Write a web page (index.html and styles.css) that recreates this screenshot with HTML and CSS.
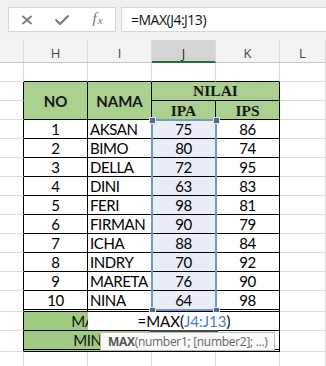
FILE: index.html
```html
<!DOCTYPE html>
<html>
<head>
<meta charset="utf-8">
<link rel="stylesheet" href="styles.css">
</head>
<body>
<div class="toolbar">
  <div class="cmdbox">
    <span class="cmd c1"><svg width="12" height="10" viewBox="0 0 12 10"><path d="M1.5 1 L10.5 9 M10.5 1 L1.5 9" stroke="#7a7a7a" stroke-width="1.7" fill="none"/></svg></span>
    <span class="cmd c2"><svg width="16" height="12" viewBox="0 0 16 12"><path d="M1.5 5.5 L6 10 L14.5 1.5" stroke="#7a7a7a" stroke-width="2.2" fill="none"/></svg></span>
    <span class="cmd c3 fx"><i>f</i><i class="fxx">x</i></span>
  </div>
  <div class="formula">=MAX(J4:J13)</div>
</div>
<div class="sheet">
  <div class="c hd"></div>
  <div class="c hd">H</div>
  <div class="c hd">I</div>
  <div class="c hd on">J</div>
  <div class="c hd">K</div>
  <div class="c hd">L</div>

  <div class="c"></div>
  <div class="c tt"></div>
  <div class="c tt"></div>
  <div class="c tt"></div>
  <div class="c tt"></div>
  <div class="c"></div>

  <div class="c lb"></div>
  <div class="c t gh r2">NO</div>
  <div class="c t gh r2">NAMA</div>
  <div class="c t gh serif s2">NILAI</div>
  <div class="c"></div>

  <div class="c lb"></div>
  <div class="c t gh serif low">IPA</div>
  <div class="c t gh serif low">IPS</div>
  <div class="c"></div>

  <div class="c lb"></div><div class="c t">1</div><div class="c t nm">AKSAN</div><div class="c t sel">75</div><div class="c t">86</div><div class="c"></div>
  <div class="c lb"></div><div class="c t">2</div><div class="c t nm">BIMO</div><div class="c t sel">80</div><div class="c t">74</div><div class="c"></div>
  <div class="c lb"></div><div class="c t">3</div><div class="c t nm">DELLA</div><div class="c t sel">72</div><div class="c t">95</div><div class="c"></div>
  <div class="c lb"></div><div class="c t">4</div><div class="c t nm">DINI</div><div class="c t sel">63</div><div class="c t">83</div><div class="c"></div>
  <div class="c lb"></div><div class="c t">5</div><div class="c t nm">FERI</div><div class="c t sel">98</div><div class="c t">81</div><div class="c"></div>
  <div class="c lb"></div><div class="c t">6</div><div class="c t nm">FIRMAN</div><div class="c t sel">90</div><div class="c t">79</div><div class="c"></div>
  <div class="c lb"></div><div class="c t">7</div><div class="c t nm">ICHA</div><div class="c t sel">88</div><div class="c t">84</div><div class="c"></div>
  <div class="c lb"></div><div class="c t">8</div><div class="c t nm">INDRY</div><div class="c t sel">70</div><div class="c t">92</div><div class="c"></div>
  <div class="c lb"></div><div class="c t">9</div><div class="c t nm">MARETA</div><div class="c t sel">76</div><div class="c t">90</div><div class="c"></div>
  <div class="c lb"></div><div class="c t end">10</div><div class="c t nm end">NINA</div><div class="c t sel end">64</div><div class="c t end">98</div><div class="c"></div>

  <div class="c lb"></div>
  <div class="c t gr s2">MAX</div>
  <div class="c t"></div>
  <div class="c t"></div>
  <div class="c"></div>

  <div class="c lb"></div>
  <div class="c t gr s2 end">MIN</div>
  <div class="c t end"></div>
  <div class="c t end"></div>
  <div class="c"></div>

  <div class="c"></div><div class="c"></div><div class="c"></div><div class="c"></div><div class="c"></div><div class="c"></div>

  <div class="range"><span class="hdl tl"></span><span class="hdl tr"></span><span class="hdl bl"></span><span class="hdl br"></span></div>
  <div class="active-edge"></div>
  <div class="editor">=MAX(<span class="ref">J4:J13</span>)</div>
  <div class="tip"><b>MAX</b>(number1; [number2]; ...)</div>
</div>
</body>
</html>
```
FILE: styles.css
```css
body {
  margin: 0;
  width: 326px;
  height: 366px;
  overflow: hidden;
  background: #fff;
  font-family: Lato, sans-serif;
}
.toolbar {
  height: 40px;
  box-sizing: border-box;
  background: #f0f0f0;
  display: flex;
  gap: 5px;
  padding: 7px 0 0 8px;
  align-items: flex-start;
}
.cmdbox {
  width: 108px;
  height: 25px;
  box-sizing: border-box;
  border: 1px solid #d6d6d6;
  background: #fff;
  display: flex;
}
.cmd {
  display: flex;
  align-items: center;
  justify-content: center;
}
.c1 { flex: 0 0 35px; }
.c2 { flex: 0 0 36px; }
.c3 { flex: 0 0 35px; }
.fx {
  font-family: "Liberation Serif", serif;
  font-size: 15px;
  color: #707070;
  line-height: 1;
  padding-bottom: 2px;
}
.fxx {
  font-size: 11px;
  position: relative;
  top: 2px;
  margin-left: 1px;
}
.formula {
  flex: 1;
  height: 25px;
  box-sizing: border-box;
  border: 1px solid #d6d6d6;
  border-right: none;
  background: #fff;
  font-family: "Open Sans", sans-serif;
  font-size: 14px;
  letter-spacing: -0.5px;
  padding-left: 9px;
  line-height: 23px;
  color: #111;
}
.sheet {
  display: grid;
  grid-template-columns: 24px 64px 64px 64px 64px 1fr;
  grid-template-rows: 23px repeat(12, 19px) 21px 19px 21px 19px;
  position: relative;
}
.c {
  box-sizing: border-box;
  border-right: 1px solid #dadada;
  border-bottom: 1px solid #dadada;
  font-size: 15px;
  line-height: 18px;
  display: flex;
  align-items: center;
  justify-content: center;
  letter-spacing: -0.4px;
  white-space: nowrap;
  overflow: hidden;
  color: #000;
}
.hd {
  background: #f3f3f3;
  border-right-color: #d9d9d9;
  border-bottom-color: #c6c6c6;
  font-family: "Open Sans", sans-serif;
  font-size: 13px;
  color: #444;
  letter-spacing: 0;
  padding-top: 4px;
}
.hd.on {
  background: #d4d4d4;
  border-bottom: 2px solid #217346;
  color: #262626;
}
.tt { border-bottom-color: #000; }
.lb { border-right-color: #000; }
.t { border-right-color: #000; border-bottom-color: #000; }
.gh {
  background: #a9d08e;
  font-weight: 700;
  letter-spacing: 0;
  color: #161616;
}
.serif { font-family: "Liberation Serif", serif; font-size: 15.5px; }
.low { padding-top: 2px; }
.r2 { grid-row: span 2; }
.s2 { grid-column: span 2; }
.nm { justify-content: flex-start; padding-left: 2px; }
.sel { background: #e8edf7; }
.end { border-bottom: 3px double #000; }
.gr { background: #9fca82; color: #111; }
.range {
  position: absolute;
  left: 151px;
  top: 79px;
  width: 66px;
  height: 192px;
  border: 2px solid #7896bf;
  box-sizing: border-box;
}
.hdl {
  position: absolute;
  width: 5px;
  height: 5px;
  background: #4b6a95;
  box-shadow: 0 0 0 1px #dfe6f0;
}
.tl { left: -3.5px; top: -3.5px; }
.tr { right: -3.5px; top: -3.5px; }
.bl { left: -3.5px; bottom: -3.5px; }
.br { right: -3.5px; bottom: -3.5px; }
.active-edge {
  position: absolute;
  left: 150px;
  top: 290px;
  width: 68px;
  height: 2px;
  background: #3c4f42;
}
.editor {
  position: absolute;
  left: 88px;
  top: 272px;
  width: 190px;
  height: 18px;
  background: #fff;
  display: flex;
  align-items: center;
  justify-content: center;
  font-size: 15px;
  line-height: 18px;
  color: #000;
  padding-left: 2px;
  box-sizing: border-box;
}
.ref { color: #4a7ec6; }
.tip {
  position: absolute;
  left: 100px;
  top: 292px;
  width: 175px;
  height: 19px;
  box-sizing: border-box;
  border: 1px solid #bdbdbd;
  background: #fafafa;
  font-family: "Open Sans", sans-serif;
  font-size: 12px;
  line-height: 17px;
  color: #666;
  padding-left: 7px;
  white-space: nowrap;
  letter-spacing: -0.3px;
}
.tip b { color: #555; font-weight: 700; }
```
